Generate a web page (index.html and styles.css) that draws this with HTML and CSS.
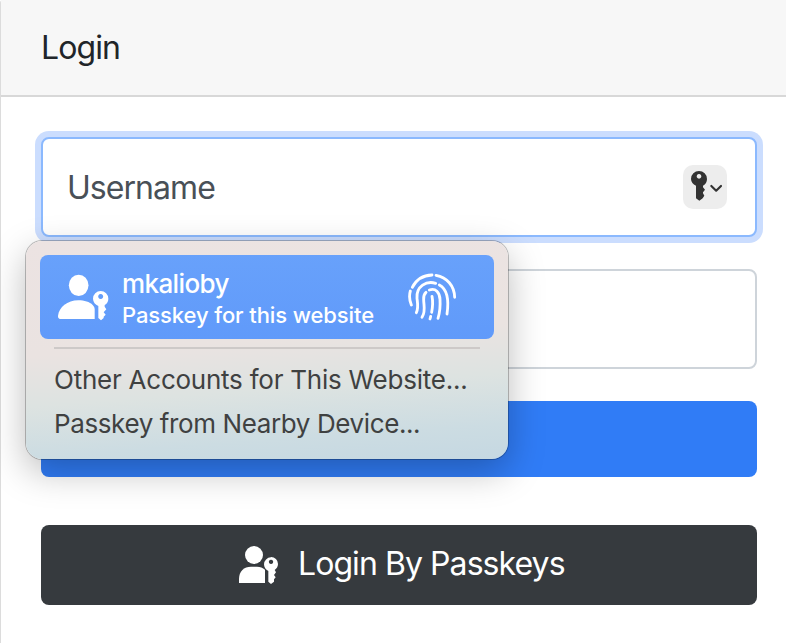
FILE: index.html
```html
<!DOCTYPE html>
<html lang="en">
<head>
<meta charset="utf-8">
<title>Login</title>
<link rel="stylesheet" href="styles.css">
</head>
<body>
<main class="card">
  <header class="card-header"><span class="title">Login</span></header>
  <form class="card-body">
    <div class="field field-focus">
      <span class="placeholder">Username</span>
      <svg class="key-button" viewBox="129 135 132 132">
        <path fill="#333" fill-rule="evenodd" d="M177 153a24 24 0 0 1 24 24c0 9-4 16-12 20v5l6 7-6 8v3l4 7-5 8-10 7-10-7v-38c-9-4-15-11-15-20a24 24 0 0 1 24-24zm0 9a7 7 0 1 0 .1 0z"/>
        <path fill="none" stroke="#333" stroke-width="6.5" stroke-linecap="round" stroke-linejoin="round" d="M214 198l14.500 14 14.500-14"/>
      </svg>
      <div class="popup">
        <div class="account">
          <svg class="account-icon" viewBox="111 129 159 147">
            <g fill="#fff">
              <ellipse cx="176" cy="166" rx="29.500" ry="32"/>
              <path d="M124 267q-11 0-10-10c3-25 28-46 61-46 18 0 34 5 43 14q6 6 6 12v30z"/>
              <path fill-rule="evenodd" d="M242 183a23 23 0 0 1 23 23c0 9-4 15-11 19v5l5 8-8 9 6 7-6 6v4l-8 7-8-7v-36c-9-4-16-12-16-22a23 23 0 0 1 23-23zm0 9a7.500 7.500 0 1 0 .1 0z"/>
            </g>
          </svg>
          <div class="account-text">
            <span class="account-name">mkalioby</span>
            <span class="account-note">Passkey for this website</span>
          </div>
          <svg class="fingerprint" viewBox="51 51 150 150">
            <g fill="none" stroke="#fff" stroke-width="8.500" stroke-linecap="round">
              <path d="M67 97C78 75 99 61 126 60"/>
              <path d="M138 61C171 67 193 92 194 127"/>
              <path d="M61 108C57 122 59 138 64 150"/>
              <path d="M79 173C86 159 83 146 81 130C78 94 110 76 137 85"/>
              <path d="M148 90C176 105 176 143 171 177"/>
              <path d="M96 187C108 169 101 151 101 134Q100 119 108 112"/>
              <path d="M118 105C137 98 149 112 150 133Q152 164 144 190"/>
              <path d="M126 124C129 139 128 156 125 172"/>
              <path d="M122 184L120 192"/>
            </g>
          </svg>
        </div>
        <hr class="divider">
        <div class="option"><span class="opt-accounts">Other Accounts for This Website...</span></div>
        <div class="option"><span class="opt-device">Passkey from Nearby Device...</span></div>
      </div>
    </div>
    <div class="field"></div>
    <div class="submit"></div>
    <div class="passkeys">
      <svg class="passkeys-icon" viewBox="54 75 126 120">
        <g fill="#fff">
          <circle cx="102" cy="105" r="27"/>
          <path d="M57 189v-13c0-22 15-36 36-36h18c10 0 17 3 24 9v40z"/>
          <path fill-rule="evenodd" d="M153 111a21 21 0 0 1 21 21c0 8-4 14-10 18l4 7-6 8 5 7-5 6v7l-9 7-8-7v-32c-8-4-13-11-13-20a21 21 0 0 1 21-21zm0 8a6.500 6.500 0 1 0 .1 0z"/>
        </g>
      </svg>
      <span class="passkeys-text">Login By Passkeys</span>
    </div>
  </form>
</main>
</body>
</html>
```
FILE: styles.css
```css
* { box-sizing: border-box; }
body {
  margin: 0;
  background: #fff;
  font-family: Inter, "Liberation Sans", sans-serif;
  color: #212529;
  overflow: hidden;
}
.card {
  height: 643px;
  border-left: 1px solid #dcdcdc;
  border-top-left-radius: 3px;
}
.card-header {
  height: 97px;
  padding: 1px 0 0 40px;
  display: flex;
  align-items: center;
  background: #f7f7f7;
  border-bottom: 2px solid #d8d8d8;
}
.title { font-size: 32px; line-height: 48px; letter-spacing: -.9px; }
.card-body {
  padding: 40px 29px 38px 40px;
  display: flex;
  flex-direction: column;
}
.field {
  height: 100px;
  margin-bottom: 32px;
  padding: 0 28px 0 24px;
  display: flex;
  align-items: center;
  justify-content: space-between;
  border: 2px solid #ced4da;
  border-radius: 8px;
  background: #fff;
}
.field-focus {
  position: relative;
  border-color: #8bb9fe;
  box-shadow: 0 0 0 6px #cbddfe;
}
.placeholder { padding-top: 1px; font-size: 32px; letter-spacing: -.95px; color: #495057; }
.key-button {
  width: 44px;
  height: 44px;
  border-radius: 10px;
  background: #ededed;
}
.popup {
  position: absolute;
  z-index: 2;
  left: -17px;
  top: 102px;
  width: 482px;
  height: 218px;
  padding: 14px;
  border-radius: 16px;
  background: linear-gradient(176deg, #ece3e2 0%, #eae3e1 46%, #dde3e1 66%, #ccdce2 86%, #c5d8e2 100%);
  box-shadow: 0 0 0 1px rgba(0, 0, 0, .24), 0 12px 36px rgba(0, 0, 0, .27);
}
.account {
  height: 84px;
  padding: 0 37px 0 17px;
  display: flex;
  align-items: center;
  border-radius: 8px;
  color: #fff;
  background: linear-gradient(#68a1fb, #609afa);
}
.account-icon { width: 53px; height: 49px; }
.account-text {
  width: 285px;
  margin-left: 12px;
  padding-top: 4px;
  display: flex;
  flex-direction: column;
  white-space: nowrap;
}
.account-name { font-size: 26px; line-height: 32px; font-weight: 500; letter-spacing: -.6px; }
.account-note { font-size: 22px; line-height: 30px; font-weight: 500; letter-spacing: -.1px; }
.fingerprint { width: 50px; height: 50px; }
.divider { margin: 8px 14px; border: 0; height: 2px; background: #cdc9c8; }
.option {
  height: 44px;
  padding-left: 14px;
  display: flex;
  align-items: center;
  font-size: 26px;
  color: #3f4141;
  white-space: nowrap;
}
.opt-accounts { letter-spacing: -.24px; }
.opt-device { letter-spacing: -.39px; }
.submit { height: 76px; margin-bottom: 48px; border-radius: 8px; background: #307cf6; }
.passkeys {
  height: 80px;
  display: flex;
  align-items: center;
  padding-left: 197px;
  gap: 18px;
  border-radius: 8px;
  background: #363a3e;
  color: #fff;
}
.passkeys-icon { width: 42px; height: 40px; }
.passkeys-text { padding-bottom: 3px; font-size: 32px; letter-spacing: -.93px; white-space: nowrap; }
```
